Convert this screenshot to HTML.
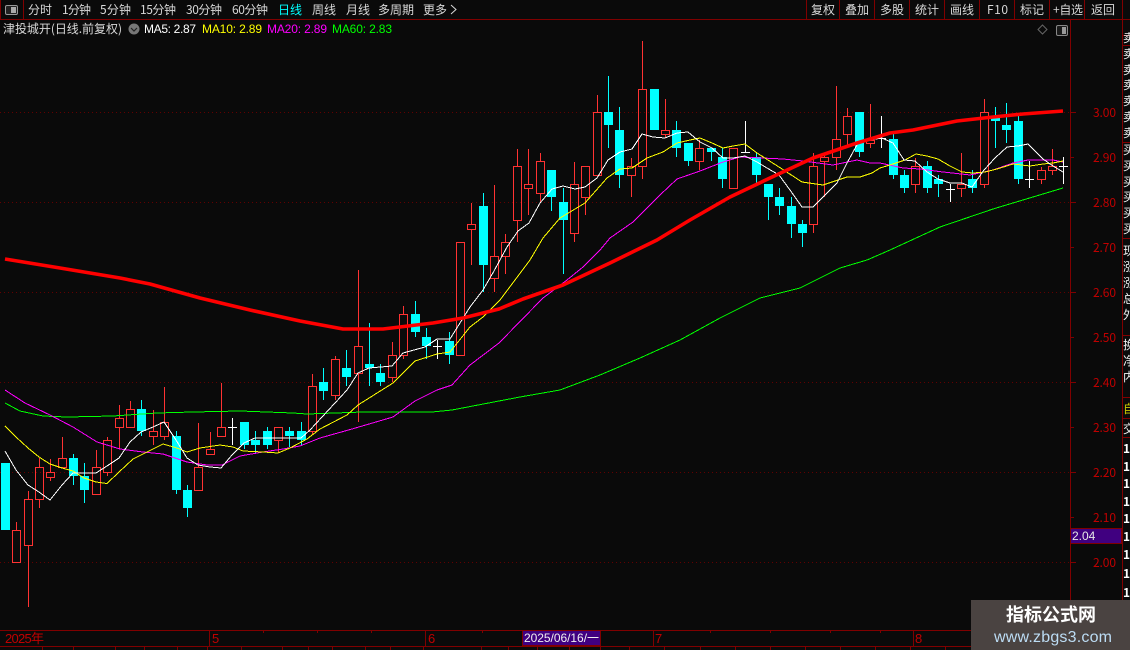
<!DOCTYPE html>
<html lang="zh">
<head>
<meta charset="utf-8">
<title>津投城开</title>
<style>
html,body{margin:0;padding:0;background:#0a0a0a;width:1130px;height:650px;overflow:hidden}
svg{display:block}
text{font-family:"WenQuanYi Zen Hei","Noto Sans CJK SC","Liberation Sans",sans-serif;font-size:12px}
.n{font-family:"Liberation Sans","WenQuanYi Zen Hei",sans-serif;font-size:12px}
.t{fill:#d8d8d8}
.a{fill:#c00000;font-family:"Liberation Sans",sans-serif;font-size:13px}
.c{fill:#f0f0f0;font-size:15px}
</style>
</head>
<body>
<svg width="1130" height="650" viewBox="0 0 1130 650" xmlns="http://www.w3.org/2000/svg">
<rect width="1130" height="650" fill="#0a0a0a"/>

<!-- grid -->
<g stroke="#620000" stroke-width="1" stroke-dasharray="1 3" shape-rendering="crispEdges">
<path d="M0 112.5H1070M0 202.5H1070M0 292.5H1070M0 382.5H1070M0 472.5H1070M0 562.5H1070"/>
</g>

<!-- frame -->
<g stroke="#800000" stroke-width="1" fill="none" shape-rendering="crispEdges">
<path d="M0 19.5H1130M1070.5 20V630M1122.5 0V600"/>
<path d="M0.5 0V19M23.5 0V19M806.5 0V19M839.5 0V19M874.5 0V19M909.5 0V19M944.5 0V19M979.5 0V19M1014.5 0V19M1049.5 0V19M1084.5 0V19"/>
<path d="M0 630.5H1070M0 646.5H1130"/>
<path d="M209.5 630V646M425.5 630V646M653.5 630V646M913.5 630V646"/>
<path d="M263.5 630V633M317.5 630V633M371.5 630V633M482.5 630V633M590.5 630V633M710.5 630V633M770.5 630V633M830.5 630V633M880.5 630V633"/>
<path d="M42.5 646V650M73.5 646V650M115.5 646V650M144.5 646V650M177.5 646V650M207.5 646V650M241.5 646V650M282.5 646V650M308.5 646V650M332.5 646V650M365.5 646V650M390.5 646V650M423.5 646V650M481.5 646V650M508.5 646V650M537.5 646V650M569.5 646V650M600.5 646V650M629.5 646V650M664.5 646V650M700.5 646V650M735.5 646V650M770.5 646V650M805.5 646V650M840.5 646V650M875.5 646V650M910.5 646V650M945.5 646V650"/>
<path d="M1070 112.5H1076M1070 157.5H1074M1070 202.5H1076M1070 247.5H1074M1070 292.5H1076M1070 337.5H1074M1070 382.5H1076M1070 427.5H1074M1070 472.5H1076M1070 517.5H1074M1070 562.5H1076"/>
<path d="M1122 35.5H1130M1122 45.5H1130M1122 142.5H1130M1122 238.5H1130M1122 335.5H1130M1122 397.5H1130M1122 418.5H1130M1122 437.5H1130"/>
</g>

<!-- candles: cyan -->
<path shape-rendering="crispEdges" stroke="#00ffff" fill="none" d="M73.5 454V485M84.5 463V503M141.5 400V436M176.5 431V494M187.5 485V517M244.5 445V449M255.5 431V454M267.5 427V449M289.5 427V447M301.5 422V445M323.5 368V400M346.5 350V386M369.5 323V386M380.5 364V386M415.5 301V337M426.5 328V359M449.5 332V364M483.5 193V292M551.5 197V211M563.5 188V274M608.5 76V148M619.5 107V188M676.5 121V157M688.5 161V166M711.5 152V161M722.5 148V188M756.5 153V184M768.5 197V220M779.5 188V215M791.5 197V238M802.5 220V247M859.5 152V157M893.5 133V179M904.5 170V193M927.5 161V193M938.5 175V197M972.5 170V193M995.5 107V148M1006.5 103V143M1018.5 115V184"/>
<path shape-rendering="crispEdges" fill="#00ffff" d="M1 463H10V530H1zM69 458H78V476H69zM80 476H89V490H80zM137 409H146V431H137zM172 436H181V490H172zM183 490H192V508H183zM240 422H249V445H240zM251 440H260V445H251zM263 431H272V445H263zM285 431H294V436H285zM297 431H306V440H297zM319 382H328V391H319zM342 368H351V377H342zM365 364H374V368H365zM376 373H385V382H376zM411 314H420V332H411zM422 337H431V346H422zM445 341H454V355H445zM479 206H488V265H479zM547 170H556V197H547zM559 202H568V220H559zM604 112H613V125H604zM615 130H624V175H615zM650 89H659V130H650zM672 130H681V148H672zM684 143H693V161H684zM707 148H716V152H707zM718 157H727V179H718zM752 157H761V175H752zM764 184H773V197H764zM775 197H784V206H775zM787 206H796V224H787zM798 224H807V233H798zM855 112H864V152H855zM889 139H898V175H889zM900 175H909V188H900zM923 166H932V188H923zM934 179H943V184H934zM968 179H977V188H968zM991 118H1000V121H991zM1002 125H1011V130H1002zM1014 121H1023V179H1014z"/>

<!-- candles: red -->
<path shape-rendering="crispEdges" stroke="#ff3232" fill="none" d="M16.5 522V530M12.5 530.5h8v32h-8zM28.5 491V499M28.5 545V607M24.5 499.5h8v46h-8zM39.5 458V467M39.5 499V508M35.5 467.5h8v32h-8zM50.5 459V472M50.5 477V481M46.5 472.5h8v5h-8zM62.5 437V458M58.5 458.5h8v9h-8zM96.5 450V467M92.5 467.5h8v27h-8zM107.5 437V440M107.5 473V476M103.5 440.5h8v32h-8zM119.5 405V418M119.5 428V449M115.5 418.5h8v9h-8zM130.5 401V409M126.5 409.5h8v18h-8zM153.5 410V431M153.5 437V445M149.5 431.5h8v5h-8zM164.5 387V422M164.5 437V440M160.5 422.5h8v14h-8zM198.5 423V467M194.5 467.5h8v23h-8zM210.5 432V449M206.5 449.5h8v5h-8zM221.5 383V427M217.5 427.5h8v9h-8zM278.5 440V453M274.5 427.5h8v13h-8zM312.5 374V386M312.5 431V435M308.5 386.5h8v45h-8zM335.5 356V359M335.5 396V400M331.5 359.5h8v36h-8zM358.5 270V346M358.5 374V422M354.5 346.5h8v27h-8zM392.5 342V355M392.5 378V382M388.5 355.5h8v22h-8zM403.5 306V314M403.5 356V359M399.5 314.5h8v41h-8zM456.5 242.5h8v113h-8zM471.5 203V224M471.5 230V265M467.5 224.5h8v5h-8zM494.5 185V256M494.5 279V292M490.5 256.5h8v22h-8zM505.5 234V242M505.5 257V274M501.5 242.5h8v14h-8zM517.5 149V166M517.5 221V242M513.5 166.5h8v54h-8zM528.5 149V184M528.5 189V215M524.5 184.5h8v4h-8zM540.5 153V161M540.5 194V202M536.5 161.5h8v32h-8zM574.5 162V184M574.5 234V242M570.5 184.5h8v49h-8zM585.5 198V215M581.5 166.5h8v31h-8zM597.5 95V112M593.5 112.5h8v63h-8zM631.5 158V166M631.5 176V197M627.5 166.5h8v9h-8zM642.5 41V89M642.5 167V179M638.5 89.5h8v77h-8zM665.5 99V130M665.5 135V138M661.5 130.5h8v4h-8zM699.5 140V148M699.5 162V170M695.5 148.5h8v13h-8zM729.5 148.5h8v40h-8zM813.5 153V166M813.5 225V233M809.5 166.5h8v58h-8zM824.5 153V157M824.5 162V197M820.5 157.5h8v4h-8zM836.5 86V139M836.5 158V170M832.5 139.5h8v18h-8zM847.5 108V116M847.5 135V148M843.5 116.5h8v18h-8zM870.5 104V140M870.5 143V148M866.5 140.5h8v3h-8zM915.5 158V166M915.5 185V193M911.5 166.5h8v18h-8zM961.5 153V184M961.5 189V197M957.5 184.5h8v4h-8zM984.5 99V112M984.5 185V188M980.5 112.5h8v72h-8zM1041.5 167V170M1041.5 180V184M1037.5 170.5h8v9h-8zM1052.5 149V166M1052.5 171V175M1048.5 166.5h8v4h-8z"/>

<!-- candles: doji -->
<path shape-rendering="crispEdges" stroke="#ffffff" fill="none" d="M232.5 418V445M228 427.5H237M437.5 340V359M433 346.5H442M745.5 121V152M741 152.5H750M881.5 116V148M877 138.5H886M950.5 184V202M946 189.5H955M1029.5 161V188M1025 179.5H1034M1063.5 157V184M1059 166.5H1068"/>

<!-- MA60 -->
<polyline shape-rendering="crispEdges" fill="none" stroke="#00ff00" stroke-width="1" points="5,403 20,411 43,416 67,417 113,416 157,413 193,412 240,411 293,413 307,414 363,412 432,412 452,410 499,401 520,397 560,390 600,375 640,358 680,340 720,318 760,298 800,288 840,268 867,260 890,250 940,227 993,209 1013,203 1033,197 1063,188"/>
<!-- MA20 -->
<polyline shape-rendering="crispEdges" fill="none" stroke="#ff00ff" stroke-width="1" points="5,390 25,403 50,415 73,427 97,442 120,449 143,452 163,454 187,462 207,465 222,465 240,456 263,452 283,449 300,446 320,438 352,429 393,417 415,401 437,390 452,385 470,365 499,343 543,298 567,280 583,267 600,250 610,238 633,222 660,195 677,179 700,171 723,162 740,157 762,158 783,159 803,161 833,165 857,160 870,163 880,163 903,168 920,169 943,172 970,175 993,170 1013,163 1028,160 1053,160 1063,162"/>
<!-- MA10 -->
<polyline shape-rendering="crispEdges" fill="none" stroke="#ffff00" stroke-width="1" points="5,426 16,437 28,448 39,457 50,464 62,468 73,471 84,478 96,482 107,483.5 119,472 133,459 147,452 163,444 177,448 187,452 200,448 220,445 233,447 243,451 263,452 278,453 290,448 307,439 320,429 347,415 358,405 393,383 415,361 437,354 450,352 470,327 483,317 500,300 530,260 543,238 560,218 585,203 607,178 620,169 632,168 647,158 663,152 677,143 690,140 700,138 712,143 723,148 733,146 745,144 757,153 779,167 802,182 823,185 847,177 860,177 872,173 880,168 893,164 905,160 916,154 927,156 938,159 950,166 962,172 973,173 985,172 997,169 1013,164 1030,166 1043,164 1053,163 1063,161"/>
<!-- MA5 -->
<polyline shape-rendering="crispEdges" fill="none" stroke="#ffffff" stroke-width="1" points="5,451 16,470 28,485 39,492 50,500 62,485 73,473 84,473 96,473 107,466 119,458 130,442 141,432 153,427 164,422 176,440 187,458 198,465 210,467 221,468 232,455 244,443 255,438 267,438 278,438 289,438 301,438 310,430 347,390 358,373 369,368 392,366 403,353 425,347 437,339 450,339 470,307 483,290 494,271 507,247 518,231 529,223 540,203 552,189 563,186 575,189 585,187 597,178 608,160 620,152 632,149 642,134 653,137 665,138 677,133 688,132 700,142 712,148 723,158 733,158 745,156 757,162 767,168 779,175 790,190 802,207 813,207 825,195 837,183 847,163 858,143 870,140 882,138 893,143 904,160 915,161 927,172 938,179 950,183 962,183 972,187 984,170 995,158 1007,147 1018,146 1028,144 1043,159 1053,166 1063,172"/>
<!-- thick red -->
<polyline fill="none" stroke="#ff0000" stroke-width="3.6" stroke-linejoin="round" points="5,259 60,268 120,278 150,284 200,298 250,310 300,321 343,329 383,329 433,323 463,318 499,309 523,299 563,285 610,263 657,240 690,220 730,197 770,178 813,158 857,143 890,133 913,130 957,121 993,117 1023,114 1063,111"/>

<!-- top toolbar -->
<g>
<rect x="5.5" y="5.5" width="12" height="9" rx="1.5" fill="#222" stroke="#999"/>
<rect x="11" y="7" width="5" height="6" fill="#aaa"/>
<g class="t">
<text x="28" y="14" textLength="24">分时</text>
<text x="62" y="14" textLength="29">1分钟</text>
<text x="100" y="14" textLength="31">5分钟</text>
<text x="140" y="14" textLength="36">15分钟</text>
<text x="186" y="14" textLength="36">30分钟</text>
<text x="232" y="14" textLength="36">60分钟</text>
<text x="278" y="14" textLength="24" style="fill:#00ffff">日线</text>
<text x="312" y="14" textLength="24">周线</text>
<text x="346" y="14" textLength="24">月线</text>
<text x="378" y="14" textLength="36">多周期</text>
<text x="423" y="14" textLength="24">更多</text>
<text x="811" y="14" textLength="24">复权</text>
<text x="845" y="14" textLength="24">叠加</text>
<text x="880" y="14" textLength="24">多股</text>
<text x="915" y="14" textLength="24">统计</text>
<text x="950" y="14" textLength="24">画线</text>
<text x="987" y="14" textLength="21">F10</text>
<text x="1020" y="14" textLength="24">标记</text>
<text x="1053" y="14" textLength="30">+自选</text>
<text x="1091" y="14" textLength="24">返回</text>
</g>
<path d="M451 5L456 9.5L451 14" fill="none" stroke="#d8d8d8"/>
</g>

<!-- info row -->
<text x="3" y="33" class="t" textLength="119">津投城开(日线.前复权)</text>
<circle cx="134" cy="29" r="5.5" fill="#777"/>
<path d="M131 28L134 31L137 28" fill="none" stroke="#222" stroke-width="1.2"/>
<text x="144" y="33" class="n" fill="#ffffff" textLength="52">MA5: 2.87</text>
<text x="202" y="33" class="n" fill="#ffff00" textLength="60">MA10: 2.89</text>
<text x="267" y="33" class="n" fill="#ff00ff" textLength="60">MA20: 2.89</text>
<text x="332" y="33" class="n" fill="#00ff00" textLength="60">MA60: 2.83</text>

<path d="M1042.5 25L1047 29.5L1042.5 34L1038 29.5Z" fill="none" stroke="#666"/>
<rect x="1056.5" y="25.5" width="11" height="10" rx="1.5" fill="#1a1a1a" stroke="#888"/>
<rect x="1062" y="27" width="4" height="7" fill="#999"/>

<!-- price labels -->
<g class="a">
<text x="1093" y="117" textLength="23">3.00</text>
<text x="1093" y="162" textLength="23">2.90</text>
<text x="1093" y="207" textLength="23">2.80</text>
<text x="1093" y="252" textLength="23">2.70</text>
<text x="1093" y="297" textLength="23">2.60</text>
<text x="1093" y="342" textLength="23">2.50</text>
<text x="1093" y="387" textLength="23">2.40</text>
<text x="1093" y="432" textLength="23">2.30</text>
<text x="1093" y="477" textLength="23">2.20</text>
<text x="1093" y="522" textLength="23">2.10</text>
<text x="1093" y="567" textLength="23">2.00</text>
</g>
<rect x="1070.5" y="528.5" width="51" height="15" fill="#400080" stroke="#800000"/>
<text x="1072" y="540" class="n" fill="#e6e6e6">2.04</text>

<!-- clipped side column -->
<g class="c">
<text x="1123" y="42">卖</text><text x="1123" y="58">卖</text><text x="1123" y="74">卖</text><text x="1123" y="89">卖</text><text x="1123" y="105">卖</text><text x="1123" y="121">卖</text><text x="1123" y="137">卖</text>
<text x="1123" y="154">买</text><text x="1123" y="170">买</text><text x="1123" y="186">买</text><text x="1123" y="201">买</text><text x="1123" y="217">买</text><text x="1123" y="233">买</text>
<text x="1123" y="255">现</text><text x="1123" y="271">涨</text><text x="1123" y="287">涨</text><text x="1123" y="303">总</text><text x="1123" y="319">外</text>
<text x="1123" y="349">换</text><text x="1123" y="365">净</text><text x="1123" y="381">内</text>
<text x="1123" y="413" style="fill:#c8c800">自</text>
<text x="1123" y="433">交</text>
<g style="font-family:'Liberation Sans',sans-serif;font-weight:bold;fill:#fff">
<text x="1123" y="453">1</text><text x="1123" y="471">1</text><text x="1123" y="488">1</text><text x="1123" y="506">1</text><text x="1123" y="523">1</text><text x="1123" y="541">1</text><text x="1123" y="559">1</text><text x="1123" y="578">1</text><text x="1123" y="597">1</text>
</g>
</g>

<!-- date labels -->
<g fill="#c00000">
<text x="5" y="643" class="a" textLength="39">2025年</text>
<text x="212" y="643" class="a">5</text>
<text x="428" y="643" class="a">6</text>
<text x="655" y="643" class="a">7</text>
<text x="915" y="643" class="a">8</text>
</g>
<rect x="522.5" y="630.5" width="78" height="15" fill="#400080" stroke="#800000"/>
<text x="524" y="642" class="n" fill="#f0f0f0" textLength="75">2025/06/16/一</text>

<!-- watermark -->
<rect x="971" y="600" width="159" height="50" fill="#4a4341"/>
<text x="1006" y="621" fill="#ffffff" style="font-family:'Noto Sans CJK SC',sans-serif;font-size:18px;font-weight:700" textLength="90">指标公式网</text>
<text x="994" y="642" fill="#bcdcf4" style="font-family:'Liberation Sans',sans-serif;font-size:16px" textLength="118">www.zbgs3.com</text>
</svg>
</body>
</html>
